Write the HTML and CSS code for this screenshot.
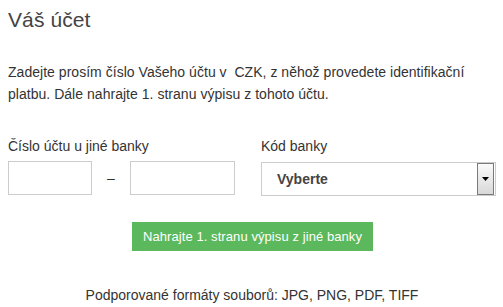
FILE: index.html
```html
<!DOCTYPE html>
<html lang="cs">
<head>
<meta charset="utf-8">
<link rel="stylesheet" href="styles.css">
</head>
<body>
<div class="page">
  <h1 class="title">Váš účet</h1>
  <p class="intro">Zadejte prosím číslo Vašeho účtu v&nbsp; CZK, z něhož provedete identifikační platbu. Dále nahrajte 1. stranu výpisu z tohoto účtu.</p>
  <div class="fields">
    <div class="field">
      <label class="label">Číslo účtu u jiné banky</label>
      <div class="account">
        <input class="input prefix" type="text">
        <span class="dash">–</span>
        <input class="input number" type="text">
      </div>
    </div>
    <div class="field">
      <label class="label">Kód banky</label>
      <div class="select">
        <span class="select-text">Vyberte</span>
        <span class="select-btn"><svg width="7" height="4" viewBox="0 0 7 4"><path d="M0 0H7L3.5 4Z" fill="#000"/></svg></span>
      </div>
    </div>
  </div>
  <div class="actions">
    <button class="upload" type="button">Nahrajte 1. stranu výpisu z jiné banky</button>
  </div>
  <p class="formats">Podporované formáty souborů: JPG, PNG, PDF, TIFF</p>
</div>
</body>
</html>
```
FILE: styles.css
```css
html, body {
  margin: 0;
  padding: 0;
  background: #fff;
}
body {
  font-family: "Liberation Sans", Arial, sans-serif;
  color: #333;
}
.page {
  padding: 8px 7px 0 8px;
}
.title {
  margin: 0;
  font-size: 21px;
  font-weight: normal;
  line-height: 23px;
  color: #444;
  letter-spacing: 0.1px;
}
.intro {
  margin: 30px 0 0 0;
  font-size: 14px;
  line-height: 22px;
  color: #333;
  letter-spacing: 0.03px;
}
.fields {
  display: grid;
  grid-template-columns: 253px 1fr;
  margin-top: 31px;
}
.label {
  display: block;
  font-size: 14px;
  line-height: 20px;
  color: #333;
}
.account {
  display: flex;
  align-items: center;
  margin-top: 5px;
}
.input {
  box-sizing: border-box;
  height: 34px;
  border: 1px solid #ccc;
  margin: 0;
  padding: 0 6px;
  background: #fff;
  font: inherit;
}
.prefix {
  width: 84px;
}
.dash {
  width: 38px;
  text-align: center;
  font-size: 14px;
  color: #333;
}
.number {
  width: 105px;
}
.select {
  box-sizing: border-box;
  display: flex;
  align-items: center;
  justify-content: space-between;
  height: 34px;
  margin-top: 6px;
  border: 1px solid #ccc;
  padding: 0 1px 0 15px;
}
.select-text {
  font-size: 14px;
  font-weight: bold;
  color: #444;
}
.select-btn {
  box-sizing: border-box;
  display: flex;
  align-items: center;
  justify-content: center;
  width: 17px;
  height: 32px;
  border: 1px solid #7a7a7a;
  background: linear-gradient(#fafafa, #d8d8d8);
}
.actions {
  display: flex;
  justify-content: center;
  margin-top: 26px;
}
.upload {
  width: 241px;
  height: 29px;
  border: 0;
  margin: 0 0 0 1px;
  padding: 0;
  background: #5cb85c;
  color: #fff;
  font-family: "Liberation Sans", Arial, sans-serif;
  font-size: 13px;
  letter-spacing: 0.08px;
}
.formats {
  margin: 34px 0 0 0;
  text-align: center;
  font-size: 14px;
  line-height: 20px;
  color: #333;
}
```
